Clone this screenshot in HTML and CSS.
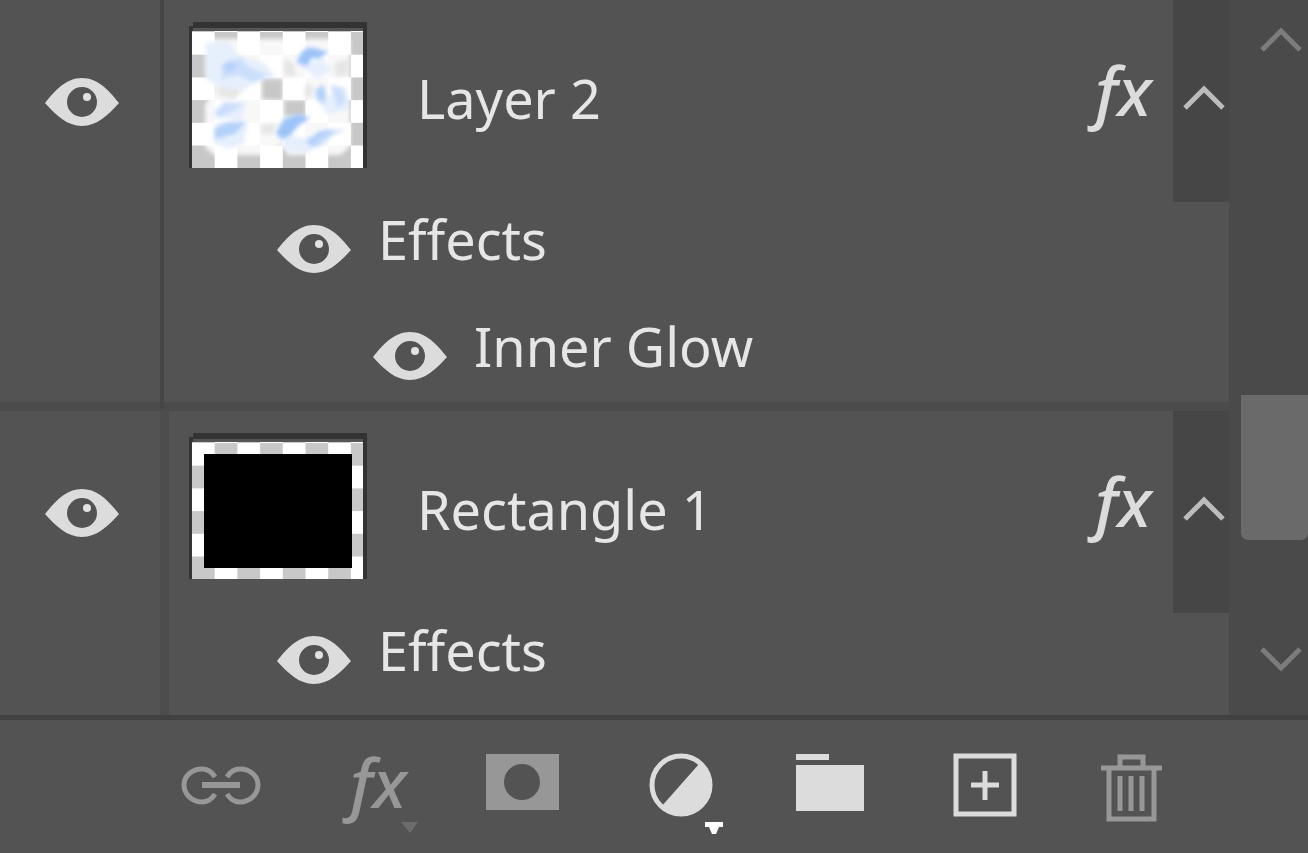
FILE: index.html
```html
<!DOCTYPE html>
<html lang="en">
<head>
    <meta charset="UTF-8">
    <title>Layers</title>
    <link rel="stylesheet" href="styles.css">
</head>
<body>
    <!-- shared shapes -->
    <svg class="defs" aria-hidden="true">
        <defs>
            <symbol id="eye" viewBox="0 0 74 50">
                <path fill="#dcdcdc" fill-rule="evenodd" d="M0 26C11 12 22 1 37 1s26 11 37 25C63 38 52 49 37 49S11 38 0 26zM37 10a15 15 0 1 0 0 30a15 15 0 1 0 0-30z"/>
                <circle cx="42" cy="20" r="4" fill="#e2e2e2"/>
            </symbol>
            <symbol id="chevron" viewBox="0 0 42 28">
                <path fill="none" stroke="currentColor" stroke-width="5" d="M2 25L21 6l19 19"/>
            </symbol>
            <pattern id="checker" width="45.4" height="45.4" y="1" patternUnits="userSpaceOnUse">
                <rect width="46" height="46" fill="#fff"/>
                <path fill="#c8c8c8" d="M22.7 0h22.7v22.7H22.7zM0 22.7h22.7v22.7H0z"/>
            </pattern>
            <filter id="soft" x="-30%" y="-30%" width="160%" height="160%">
                <feGaussianBlur stdDeviation="2"/>
            </filter>
        </defs>
    </svg>

    <main class="panel">
        <div class="list">
            <section class="layer">
                <button class="visibility" aria-label="Layer visibility"><svg class="eye"><use href="#eye"/></svg></button>
                <div class="content">
                    <div class="head">
                        <svg class="thumb" viewBox="0 0 178 146">
                            <path fill="#333" d="M4 0h174v146H0V4h4z"/>
                            <path fill="#555" d="M4 6h170v4H4z"/>
                            <svg x="3" y="9" width="171" height="137">
                                <rect width="171" height="137" fill="url(#checker)"/>
                                <g filter="url(#soft)">
                                    <path fill="#fff" fill-opacity=".88" d="M13 8h145v108l-10 8H96l-8-10-16 10H22l-9-8V74l10-16-10-12zM70 48v21h21V48zM92 69v16h22V69z" fill-rule="evenodd"/>
                                    <path fill="#d8d8d8" fill-opacity=".6" d="M26 56l16-4 10 8-12 8-14-4zM92 28l10 4 2 14-12-2zM142 32l14-4v16l-12 2zM70 94l14-2-4 12-12-2zM114 52l8 4-4 12-6-4z"/>
                                    <path fill="#e6effc" d="M14 12l22-2 10 14 26 8 12 14-22 6-12 8-22-4-14-8zM21 86l10-16 24 2-6 18zM20 110l6-18 30-2-4 22-16 6zM88 104l20 2 24 4-16 12-22-2zM108 34l24-6 8 12-16 8zM126 70l28-14 4 22-22 6z"/>
                                    <path fill="#cbdffb" d="M30 34l18-8 8 10 20 8-14 8-16-8-16 4zM22 80l12-9 18 2-12 8-14 6zM120 112l12-12 22-2-14 7-14 12zM138 54l12 2 4 14-8 8z"/>
                                </g>
                                <g filter="url(#soft)">
                                    <path fill="#9cc3f8" d="M105 32c2-11 10-17 17-15l14 4-9 7-7-1-5 8zM84 102l8-14 14-5 12 4-12 8-8 10-9 3z"/>
                                    <path fill="#b2d0f9" d="M22 98l12-6 19-1-9 11-20 6zM123 60l8-7 3 10-2 10-7-5zM114 110l14-10 16-1-14 8-10 9zM30 36l9-6 6 5-7 6z"/>
                                </g>
                            </svg>
                        </svg>
                        <span class="name">Layer 2</span>
                        <svg class="fx" viewBox="0 0 90 100" role="img" aria-label="Layer has effects"><text x="12" y="68">fx</text></svg>
                    </div>
                    <div class="effect">
                        <button class="icon-btn" aria-label="Effects visibility"><svg class="eye"><use href="#eye"/></svg></button>
                        <span class="name">Effects</span>
                    </div>
                    <div class="effect nested">
                        <button class="icon-btn" aria-label="Inner Glow visibility"><svg class="eye"><use href="#eye"/></svg></button>
                        <span class="name">Inner Glow</span>
                    </div>
                </div>
                <button class="toggle" aria-label="Collapse effects"><svg class="chevron"><use href="#chevron"/></svg></button>
            </section>

            <section class="layer last">
                <button class="visibility" aria-label="Layer visibility"><svg class="eye"><use href="#eye"/></svg></button>
                <div class="content">
                    <div class="head">
                        <svg class="thumb" viewBox="0 0 178 146">
                            <path fill="#333" d="M4 0h174v146H0V4h4z"/>
                            <path fill="#555" d="M4 6h170v4H4z"/>
                            <svg x="3" y="9" width="171" height="137">
                                <rect width="171" height="137" fill="url(#checker)"/>
                                <rect x="12" y="12" width="148" height="114"/>
                            </svg>
                        </svg>
                        <span class="name">Rectangle 1</span>
                        <svg class="fx" viewBox="0 0 90 100" role="img" aria-label="Layer has effects"><text x="12" y="68">fx</text></svg>
                    </div>
                    <div class="effect">
                        <button class="icon-btn" aria-label="Effects visibility"><svg class="eye"><use href="#eye"/></svg></button>
                        <span class="name">Effects</span>
                    </div>
                </div>
                <button class="toggle" aria-label="Collapse effects"><svg class="chevron"><use href="#chevron"/></svg></button>
            </section>
        </div>

        <div class="scrollbar">
            <button class="scroll-up" aria-label="Scroll up"><svg class="chevron"><use href="#chevron"/></svg></button>
            <div class="track"><div class="handle"></div></div>
            <button class="scroll-down" aria-label="Scroll down"><svg class="chevron"><use href="#chevron"/></svg></button>
        </div>
    </main>

    <footer class="toolbar">
        <button class="tool dim" aria-label="Link layers">
            <svg viewBox="0 0 100 100">
                <path fill="none" stroke="currentColor" stroke-width="5" d="M43 37c-3-5-7-8-13-8-10 0-18 7-18 16s8 17 18 17c6 0 10-3 13-8M55 37c3-5 7-8 13-8 10 0 18 7 18 16s-8 17-18 17c-6 0-10-3-13-8"/>
                <path stroke="currentColor" stroke-width="6" d="M30 45h38"/>
            </svg>
        </button>
        <button class="tool dim" aria-label="Add a layer style">
            <svg viewBox="0 0 100 100">
                <text x="26" y="68">fx</text>
                <path fill="#6c6c6c" d="M77 82h17l-8 11z"/>
            </svg>
        </button>
        <button class="tool dim" aria-label="Add a mask">
            <svg viewBox="0 0 100 100">
                <path fill="currentColor" fill-rule="evenodd" d="M10 14h73v56H10zM46 24a18 18 0 1 0 0 36a18 18 0 1 0 0-36z"/>
            </svg>
        </button>
        <button class="tool" aria-label="New fill or adjustment layer">
            <svg viewBox="0 0 100 100">
                <circle cx="53" cy="45" r="29" fill="none" stroke="currentColor" stroke-width="5"/>
                <path fill="currentColor" d="M71 24L33 67a30 30 0 0 0 48-14a30 30 0 0 0-10-29z"/>
                <path fill="#fff" d="M77 82h18v5h-4l-3 7h-4l-3-7h-4z"/>
            </svg>
        </button>
        <button class="tool" aria-label="New group">
            <svg viewBox="0 0 100 100">
                <path fill="currentColor" d="M16 14h33v6H16zM16 25h68v46H16z"/>
            </svg>
        </button>
        <button class="tool" aria-label="New layer">
            <svg viewBox="0 0 100 100">
                <path fill="none" stroke="currentColor" stroke-width="5" d="M24 16h58v58H24z"/>
                <path fill="none" stroke="currentColor" stroke-width="5" d="M53 31v29M39 45h28"/>
            </svg>
        </button>
        <button class="tool dim" aria-label="Delete layer">
            <svg viewBox="0 0 100 100">
                <path fill="none" stroke="currentColor" stroke-width="5" d="M17 28h61M36 26V17h23v9M25 28v51h45V28"/>
                <path fill="none" stroke="currentColor" stroke-width="5" d="M36 36v35M47 36v35M58 36v35"/>
            </svg>
        </button>
    </footer>
</body>
</html>
```

FILE: styles.css
```css
* {
    box-sizing: border-box;
}
body {
    margin: 0;
    height: 100vh;
    display: flex;
    flex-direction: column;
    overflow: hidden;
    background: #535353;
    color: #e6e6e6;
    font-family: "Noto Sans", sans-serif;
    font-size: 54px;
    line-height: 72px;
}
button {
    display: flex;
    padding: 0;
    border: 0;
    background: none;
    color: #dcdcdc;
    font: inherit;
}
svg {
    display: block;
    flex: none;
}
.defs {
    position: absolute;
    width: 0;
    height: 0;
}

/* layer list */
.panel {
    flex: 1;
    min-height: 0;
    display: flex;
}
.list {
    flex: 1;
    display: flex;
    flex-direction: column;
    overflow: hidden;
}
.layer {
    display: grid;
    grid-template-columns: 160px 1fr 56px;
    height: 411px;
    flex: none;
    border-bottom: 9px solid #4b4b4b;
}
.layer.last {
    flex: 1;
    border-bottom: 0;
}
.visibility {
    height: 204px;
    padding-left: 4px;
    align-items: center;
    justify-content: center;
}
.eye {
    width: 74px;
    height: 50px;
}
.content {
    padding-left: 25px;
    border-left: 4px solid #464646;
}
.last .content {
    padding-left: 20px;
    border-left: 9px solid #4d4d4d;
}
.head {
    height: 195px;
    display: flex;
    align-items: center;
}
.thumb {
    width: 178px;
    height: 146px;
    margin: 0 50px 6px 0;
}
.name {
    white-space: nowrap;
}
.fx {
    width: 90px;
    height: 100px;
    margin-left: auto;
}
.fx, .tool svg {
    overflow: visible;
}
.fx text, .tool text {
    fill: currentColor;
    font-style: italic;
    font-weight: 500;
    font-size: 68px;
}
.fx text {
    fill: #dcdcdc;
}
.effect {
    height: 107px;
    padding-left: 88px;
    display: flex;
    align-items: center;
    gap: 27px;
}
.effect.nested {
    padding-left: 184px;
}
.effect .name {
    padding-bottom: 20px;
}
.toggle {
    height: 202px;
    padding: 0 0 8px 6px;
    align-items: center;
    justify-content: center;
    background: #464646;
    color: #bcbcbc;
}
.chevron {
    width: 42px;
    height: 28px;
}

/* scrollbar */
.scrollbar {
    width: 79px;
    display: flex;
    flex-direction: column;
    background: #4a4a4a;
}
.scroll-up, .scroll-down {
    padding-left: 24px;
    align-items: center;
    justify-content: center;
    color: #7c7c7c;
}
.scroll-up {
    height: 78px;
}
.scroll-down {
    height: 110px;
}
.scroll-down .chevron {
    transform: rotate(180deg);
}
.track {
    flex: 1;
    display: flex;
    flex-direction: column;
    justify-content: flex-end;
    padding: 0 0 65px 12px;
}
.handle {
    height: 145px;
    border-radius: 0 0 7px 7px;
    background: #6a6a6a;
}

/* bottom toolbar */
.toolbar {
    height: 138px;
    display: flex;
    padding: 20px 98px 0 146px;
    border-top: 5px solid #414141;
}
.tool {
    flex: 1;
    justify-content: center;
}
.tool svg {
    width: 100px;
    height: 100px;
}
.tool.dim {
    color: #979797;
}
```
